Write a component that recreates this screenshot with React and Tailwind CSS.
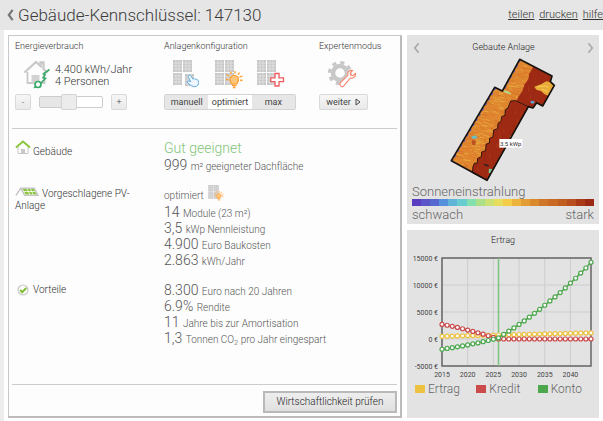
import React from "react";

const SCALE = [
  "#5a3cc0", "#5a55c8", "#5568d0", "#5590dc", "#60b4d8", "#68ccd0", "#84dfae",
  "#acdf88", "#cce074", "#e8dc5c", "#f4cc48", "#ecb43c", "#e29e34", "#da8a2c",
  "#d0762a", "#c86a24", "#c05e22", "#b84e20", "#a83a18", "#9a2812",
];

const KONTO = [
  -1900, -1750, -1600, -1450, -1280, -1100, -900, -720, -500, -280, -50, 200,
  850, 1450, 2050, 2700, 3350, 4050, 4750, 5500, 6250, 7050, 7800, 8600, 9450,
  10350, 11250, 12200, 13150, 14200,
];
const KREDIT = KONTO.map((_, i) => [2700, 2550, 2350, 2150, 1900, 1650, 1400, 1150, 900, 600, 300][i] ?? 0);
const ERTRAG = KONTO.map((_, i) => 500 + i * 22);

const SERIES = [
  { name: "Ertrag", color: "#edc240", data: ERTRAG },
  { name: "Kredit", color: "#cb4b4b", data: KREDIT },
  { name: "Konto", color: "#4da74d", data: KONTO },
];

const Modules = ({ children, small, missing }) => {
  const cells = [[0, 0], [10, 0], [0, 13], [10, 13]];
  return (
    <svg viewBox="0 0 28 29" className={small ? "w-4 h-4" : "w-7 h-[29px]"} aria-hidden="true">
      {cells.map(([x, y], i) => {
        const ox = missing && i === 3 ? 12 : x;
        const oy = missing && i === 3 ? 14 : y;
        return (
          <g key={i}>
            <rect x={ox} y={oy} width="9" height="12" fill="#c6c6c6" />
            <path
              d={`M${ox + 3} ${oy}v12M${ox + 6} ${oy}v12M${ox} ${oy + 3}h9M${ox} ${oy + 6}h9M${ox} ${oy + 9}h9`}
              stroke="#e8e8e8"
              strokeWidth=".7"
            />
          </g>
        );
      })}
      {children}
    </svg>
  );
};

const Hand = () => (
  <path
    d="M15.5 15.5c.8-.8 1.8-.4 2.3.4l2.2 3.3c.6-.8 1.5-.7 2 .1.7-.6 1.5-.3 1.8.5.8-.3 1.4.2 1.5 1.1.4 2 .6 4-1.6 5.2-2.4 1.3-4.6.3-6-.9l-3-2.2c-1.2-1.3.2-2.4 1.5-1.8l1.6.6-2.5-4.8c-.3-.6-.2-1.1.2-1.5z"
    fill="#eef7fd"
    stroke="#62aee0"
    strokeWidth="1"
  />
);

const Bulb = () => (
  <g stroke="#ff9d2e" fill="none">
    <path d="M15 20c0-3 2-4.500 4.200-4.500S23.500 17 23.500 20c0 1.500-1.200 2.500-1.600 4h-5.200c-.4-1.500-1.700-2.500-1.700-4z" fill="#ffc67c" strokeWidth="1.200" />
    <path d="M17 25.500h4.500M18 27.500h2.500" strokeWidth="1.500" />
    <path d="M11.500 14.500l2.500 1.500M11 19.500h2.500M15.500 11.500l1 2.500M20 11v2.500M24.500 12.500L23 14.800M27.500 16l-3 1.200M27.500 20.500l-2.500-.3" strokeWidth="1.300" />
  </g>
);

const ConsumptionIcon = () => (
  <svg viewBox="0 0 28 29" className="w-7 h-[29px] shrink-0" aria-hidden="true">
    <path d="M1.500 12.500L13 2l4.500 4V2.500h3V9l4 3.500" fill="none" stroke="#c8c8c8" strokeWidth="2.300" />
    <path d="M4.500 12v11h17V12" fill="none" stroke="#c8c8c8" strokeWidth="1.800" />
    <path d="M8.500 15h8v8h-8z" fill="#d2d2d2" />
    <path d="M26.500 9.500l-6 4.500 1.500.8-2 3 2.500.7-4.500 4.500" fill="none" stroke="#3aaa6a" strokeWidth="1.600" />
    <circle cx="15" cy="24.500" r="3" fill="#fff" stroke="#3aaa6a" strokeWidth="1.700" />
    <path d="M11 28l1.800-1.500" stroke="#3aaa6a" strokeWidth="1.500" />
  </svg>
);

const GearIcon = () => (
  <svg viewBox="0 0 30 29" className="w-[30px] h-[29px]" aria-hidden="true">
    <circle cx="13" cy="13" r="7" fill="none" stroke="#c8c8c8" strokeWidth="4.500" />
    <circle cx="13" cy="13" r="10.500" fill="none" stroke="#c8c8c8" strokeWidth="3.200" strokeDasharray="4.120 4.120" />
    <path
      d="M28.500 13.500l-3 2.200-2-.6-.3-2 2.300-2.600c-3-.6-5.500 1.600-4.700 4.800l-7.200 7.400c-1 1.200-.8 2.600.2 3.400 1 .8 2.300.6 3.200-.5l6.300-7.600c3 .8 5.500-1.600 5.200-4.500z"
      fill="#fff"
      stroke="#fb8468"
      strokeWidth="1.100"
    />
  </svg>
);

const Stat = ({ value, children }) => (
  <p className="text-sm leading-4 whitespace-nowrap">
    {value} <span className="text-[10px] leading-none">{children}</span>
  </p>
);

const smallButton =
  "h-4 text-[9px] leading-none border border-[#d9d9d9] rounded-[2px] bg-linear-to-b from-[#f6f6f6] to-[#e9e9e9] text-[#444] flex items-center justify-center";

// deterministic noise for the roof texture
const streaks = (seed, count) => {
  let s = seed;
  const next = () => {
    s = (s * 16807) % 2147483647;
    return s / 2147483647;
  };
  return Array.from({ length: count }, () => ({
    x: 30 + next() * 310,
    y: 25 + next() * 365,
    w: 6 + next() * 14,
    c: next(),
  }));
};

const ORANGE = ["#e3a03a", "#dc7a2a", "#e08d30", "#d6742a", "#e6a83e"];
const LIGHT = streaks(77, 1300);
const DARK = streaks(991, 260);
const OUTLINE = "M240 30L337 80L332 97L344 108L309 170L291 160L280 176L266 172L142 393L35 334L165 114L188 125Z";
const ARRAY =
  "M213 155L228 154L266 172L142 393L98 370L100 352L104 342L113 341L114 327L125 323L126 308L138 304L139 285L149 281L150 267L160 262L162 242L174 238L175 222L184 216L186 202L196 198L197 181L205 176Z";

const Roof = () => (
  <svg viewBox="25 20 330 390" className="w-[110px] h-[130px]" role="img" aria-label="Gebaute Anlage">
    <defs>
      <clipPath id="roof"><path d={OUTLINE} /></clipPath>
      <clipPath id="hot">
        <path d={ARRAY} />
        <path d="M282 50L268 75L266 90L255 105L248 125L238 140L230 154L280 178L345 175V70Z" />
      </clipPath>
    </defs>
    <g clipPath="url(#roof)">
      <rect x="25" y="20" width="330" height="390" fill="#df8530" />
      {LIGHT.map((d, i) => (
        <path key={i} d={`M${d.x} ${d.y}l${d.w} 3`} stroke={ORANGE[Math.floor(d.c * 5)]} strokeWidth="3" />
      ))}
      <g clipPath="url(#hot)">
        <rect x="25" y="20" width="330" height="390" fill="#9e2a14" />
        {DARK.map((d, i) => (
          <path key={i} d={`M${d.x} ${d.y}v${d.w}`} stroke={d.c > 0.5 ? "#ae3a1a" : "#962614"} strokeWidth="2.500" />
        ))}
      </g>
      <path d="M284 112l20-7 16-9 12 2 10 12-16 30-12-6-10-9-14-4z" fill="#e9ac3a" />
      <path d="M294 112l22-2 10 4M306 120l18 6" stroke="#f3cf50" strokeWidth="3" fill="none" />
      <path d="M190 122l14 3 12 8-6 2-16-6z" fill="#b5d98a" />
      <path d="M94 262l14-4 6 8-14 3z" fill="#6ac0c8" />
      <path d="M97 272l12 2-2 14-11-2z" fill="#bd5225" />
      <path d="M272 156l10-2 3 7-10 2z" fill="#5ba6d8" />
      <path d="M148 358l11 2-5 12-7-1zM212 259l6 3-4 5z" fill="#78cf9a" />
      <path d="M166 114L35 334M240 30L188 124" stroke="#5961cf" strokeWidth="9" strokeDasharray="8 10" fill="none" />
    </g>
    <path d={ARRAY} fill="none" stroke="#33150a" strokeWidth="3" />
    <path d="M133 345l14 5" stroke="#222" strokeWidth="4" />
    <path d={OUTLINE} fill="none" stroke="#17130f" strokeWidth="5" strokeLinejoin="round" />
    <rect x="179" y="269" width="69" height="26" fill="#fff" />
    <text x="213" y="289" textAnchor="middle" fontSize="18" fontWeight="400" fill="#333">3.5 kWp</text>
  </svg>
);

const px = (i) => 35 + (i * 149) / 29;
const py = (v) => 89 - v * 0.0054;

const Chart = () => (
  <svg viewBox="0 0 192 130" className="w-full" role="img" aria-label="Ertrag, Kredit und Konto von 2015 bis 2044">
    {[15000, 10000, 5000, 0, -5000].map((v) => (
      <g key={v}>
        <path d={`M35 ${py(v)}H184`} stroke="#cdcdcd" />
        <text x="31" y={py(v) + 3} textAnchor="end" fontSize="7" fontWeight="400" fill="#444">{v} €</text>
      </g>
    ))}
    {[2015, 2020, 2025, 2030, 2035, 2040].map((year, i) => (
      <g key={year}>
        <path d={`M${px(i * 5)} 8V116`} stroke="#cdcdcd" />
        <text x={px(i * 5)} y="127" textAnchor="middle" fontSize="7" fontWeight="400" fill="#444">{year}</text>
      </g>
    ))}
    <rect x="35" y="8" width="149" height="108" fill="none" stroke="#666" strokeWidth="1.500" />
    <path d={`M${px(11)} 8V116`} stroke="#7cc47c" strokeWidth="1.500" />
    {SERIES.map((s) => (
      <g key={s.name} stroke={s.color}>
        <polyline points={s.data.map((v, i) => `${px(i)},${py(v)}`).join(" ")} fill="none" strokeWidth="1.500" />
        {s.data.map((v, i) => (
          <circle key={i} cx={px(i)} cy={py(v)} r="2" fill="#fff" strokeWidth="1.200" />
        ))}
      </g>
    ))}
  </svg>
);

const Chevron = ({ flip }) => (
  <svg viewBox="0 0 8 14" className="w-[7px] h-3" fill="none" stroke="currentColor" strokeWidth="2" aria-hidden="true">
    <path d={flip ? "M1.500 1.500L6 7l-4.500 5.500" : "M6.500 1.500L2 7l4.500 5.500"} />
  </svg>
);

const App = () => {
  const [mode, setMode] = React.useState("optimiert");
  const [usage, setUsage] = React.useState(45);
  const step = (n) => setUsage((u) => Math.min(100, Math.max(0, u + n)));

  return (
    <div className="font-[Roboto,sans-serif] font-light text-[#555] bg-white">
      <header className="h-[30px] bg-[#e6e6e6] flex items-center justify-between pl-[7px]">
        <div className="flex items-center gap-1">
          <a href="#zurueck" aria-label="Zurück" className="text-[#777]">
            <svg viewBox="0 0 8 14" className="w-[7px] h-3" fill="none" stroke="currentColor" strokeWidth="2.500" aria-hidden="true">
              <path d="M6.500 1L2 7l4.500 6" />
            </svg>
          </a>
          <h1 className="text-[17px] leading-none text-[#3c3c3c] whitespace-nowrap">Gebäude-Kennschlüssel: 147130</h1>
        </div>
        <nav className="flex gap-[5px] text-[11px] text-[#333] underline">
          <a href="#teilen">teilen</a>
          <a href="#drucken">drucken</a>
          <a href="#hilfe">hilfe</a>
        </nav>
      </header>

      <div className="flex gap-[5px] pr-1 border-l-4 border-[#ededed]">
        <main className="flex-1 min-w-0 mt-[5px] ml-1 mb-[3px] bg-[#fdfdfd] border border-[#c8c8c8] border-r-2 border-b-2 border-r-[#bbb] border-b-[#bbb] flex flex-col">
          <section className="grid grid-cols-[149px_155px_1fr] h-[93px] mx-[3px] px-[3px] pt-1 border-b border-[#ccc]">
            <div>
              <h2 className="text-[9px] leading-3 text-[#333]">Energieverbrauch</h2>
              <div className="flex gap-1 mt-2 pl-2 h-[30px]">
                <ConsumptionIcon />
                <p className="text-[11px] leading-3 pt-1 text-[#333] whitespace-nowrap">
                  4.400 kWh/Jahr
                  <br />
                  4 Personen
                </p>
              </div>
              <div className="flex items-center gap-2 mt-1">
                <button className={`${smallButton} w-4`} aria-label="weniger" onClick={() => step(-5)}>-</button>
                <input
                  type="range"
                  aria-label="Energieverbrauch"
                  value={usage}
                  onChange={(e) => setUsage(Number(e.target.value))}
                  className="appearance-none w-16 h-3 rounded-[2px] border border-[#ccc] bg-linear-to-r from-[#e6e6e6] from-50% to-white to-50% [&::-webkit-slider-thumb]:appearance-none [&::-webkit-slider-thumb]:w-4 [&::-webkit-slider-thumb]:h-4 [&::-webkit-slider-thumb]:rounded-[2px] [&::-webkit-slider-thumb]:border [&::-webkit-slider-thumb]:border-[#d3d3d3] [&::-webkit-slider-thumb]:bg-[#ececec]"
                />
                <button className={`${smallButton} w-4`} aria-label="mehr" onClick={() => step(5)}>+</button>
              </div>
            </div>

            <div>
              <h2 className="text-[9px] leading-3 text-[#333]">Anlagenkonfiguration</h2>
              <div className="flex gap-[14px] mt-2 pl-[9px] h-[30px]">
                <Modules missing><Hand /></Modules>
                <Modules><Bulb /></Modules>
                <Modules>
                  <path d="M18 13.500h4v4.300h4.500v3.900H22V26h-4v-4.300h-4.300v-3.900H18z" fill="#fff" stroke="#ef5b5f" strokeWidth="1.300" />
                </Modules>
              </div>
              <div className="flex mt-1 w-[132px] h-4 border border-[#d3d3d3] rounded-[2px]">
                {["manuell", "optimiert", "max"].map((m) => (
                  <button
                    key={m}
                    aria-pressed={mode === m}
                    onClick={() => setMode(m)}
                    className={`flex-1 text-[9px] leading-none font-normal text-[#444] ${mode === m ? "bg-white" : "bg-[#e6e6e6]"}`}
                  >
                    {m}
                  </button>
                ))}
              </div>
            </div>

            <div>
              <h2 className="text-[9px] leading-3 text-[#333]">Expertenmodus</h2>
              <div className="mt-2 pl-2 h-[30px]"><GearIcon /></div>
              <button className={`${smallButton} w-[49px] gap-1 mt-1 font-normal`}>
                weiter
                <svg viewBox="0 0 6 8" className="w-1.5 h-2" fill="none" stroke="#444" aria-hidden="true">
                  <path d="M1 1l4 3-4 3z" />
                </svg>
              </button>
            </div>
          </section>

          <section className="grid grid-cols-[149px_1fr] px-[6px] pt-[11px]">
            <h2 className="text-[10px] leading-3 text-[#333] flex gap-0.5">
              <svg viewBox="0 0 16 15" className="w-4 h-[15px]" fill="none" aria-hidden="true">
                <path d="M3 7v6.500h10V7" stroke="#c8c8c8" />
                <path d="M6 9h4v4.500H6z" fill="#c8c8c8" />
                <path d="M1 7.500L8 1.500l7 6" stroke="#8ac53e" strokeWidth="2" />
              </svg>
              <span className="pt-1.5">Gebäude</span>
            </h2>
            <div>
              <p className="text-sm leading-[17px] text-[#82c678]">Gut geeignet</p>
              <Stat value="999">m² geeigneter Dachfläche</Stat>
            </div>
          </section>

          <section className="grid grid-cols-[149px_1fr] px-[6px] pt-3">
            <h2 className="text-[10px] leading-3 text-[#333] pt-0.5 pr-4">
              <svg viewBox="0 0 25 10" className="inline w-6 h-2.5 mr-[3px] align-baseline" fill="none" aria-hidden="true">
                <path d="M1 8.500L6 1h14l4 7.500H10L6 1" stroke="#c4c4c4" strokeWidth="1.500" />
                <path d="M8 1.800h11.500l3 5.700H11z" fill="#8ac53e" />
                <path d="M9 4.500h12M12.500 1.500l3 6.500M16 1.500l3 6.500" stroke="#fff" strokeWidth=".8" />
              </svg>
              Vorgeschlagene PV-Anlage
            </h2>
            <div>
              <p className="text-[10px] leading-4 flex gap-1 h-[19px]">
                <span className="pt-[3px]">optimiert</span>
                <Modules small><Bulb /></Modules>
              </p>
              <Stat value="14">Module (23 m²)</Stat>
              <Stat value="3,5">kWp Nennleistung</Stat>
              <Stat value="4.900">Euro Baukosten</Stat>
              <Stat value="2.863">kWh/Jahr</Stat>
            </div>
          </section>

          <section className="grid grid-cols-[149px_1fr] px-[6px] pt-[14px]">
            <h2 className="text-[10px] leading-3 text-[#333] flex gap-1 pl-0.5 pt-0.5">
              <svg viewBox="0 0 12 12" className="w-3 h-3" fill="none" aria-hidden="true">
                <circle cx="6" cy="6" r="5" stroke="#c8c8c8" strokeWidth="1.200" />
                <path d="M3.200 6l2 2.200L9.300 4" stroke="#7fbf35" strokeWidth="2" />
              </svg>
              Vorteile
            </h2>
            <div>
              <Stat value="8.300">Euro nach 20 Jahren</Stat>
              <Stat value="6.9%">Rendite</Stat>
              <Stat value="11">Jahre bis zur Amortisation</Stat>
              <Stat value="1,3">Tonnen CO<sub>2</sub> pro Jahr eingespart</Stat>
            </div>
          </section>

          <div className="mt-auto mx-[3px] pt-[6px] pb-[3px] border-t border-[#ccc] flex justify-end">
            <button className="h-[22px] w-[134px] border-2 border-[#b9b9b9] bg-linear-to-b from-[#eee] to-[#e0e0e0] text-[10px] leading-none text-[#222] whitespace-nowrap">
              Wirtschaftlichkeit prüfen
            </button>
          </div>
        </main>

        <aside className="w-48 shrink-0 flex flex-col gap-1.5 pt-[5px] pb-[3px]">
          <section className="bg-[#e3e3e3] h-[189px] px-[5px] pt-[5px]">
            <div className="flex items-center justify-between h-4 text-[#aaa]">
              <button aria-label="Vorherige" className="pl-px"><Chevron /></button>
              <h2 className="text-[9px] text-[#222]">Gebaute Anlage</h2>
              <button aria-label="Nächste"><Chevron flip /></button>
            </div>
            <div className="flex justify-center h-[129px]"><Roof /></div>
            <p className="text-[13px] leading-[14px] text-[#666]">Sonneneinstrahlung</p>
            <div className="flex h-[7px]">
              {SCALE.map((c) => (
                <span key={c} className="flex-1" style={{ backgroundColor: c }} />
              ))}
            </div>
            <div className="flex justify-between text-[13px] leading-[18px] text-[#666]">
              <span>schwach</span>
              <span>stark</span>
            </div>
          </section>

          <section className="bg-[#e3e3e3] h-[188px] pt-1">
            <h2 className="text-[9px] leading-3 text-[#222] text-center">Ertrag</h2>
            <div className="pt-1"><Chart /></div>
            <ul className="grid grid-cols-3 pl-2 text-xs leading-[18px] text-[#666]">
              {SERIES.map((s) => (
                <li key={s.name} className="flex items-center gap-[3px]">
                  <span className="w-2.5 h-2" style={{ backgroundColor: s.color }} />
                  {s.name}
                </li>
              ))}
            </ul>
          </section>
        </aside>
      </div>
    </div>
  );
};

export default App;
